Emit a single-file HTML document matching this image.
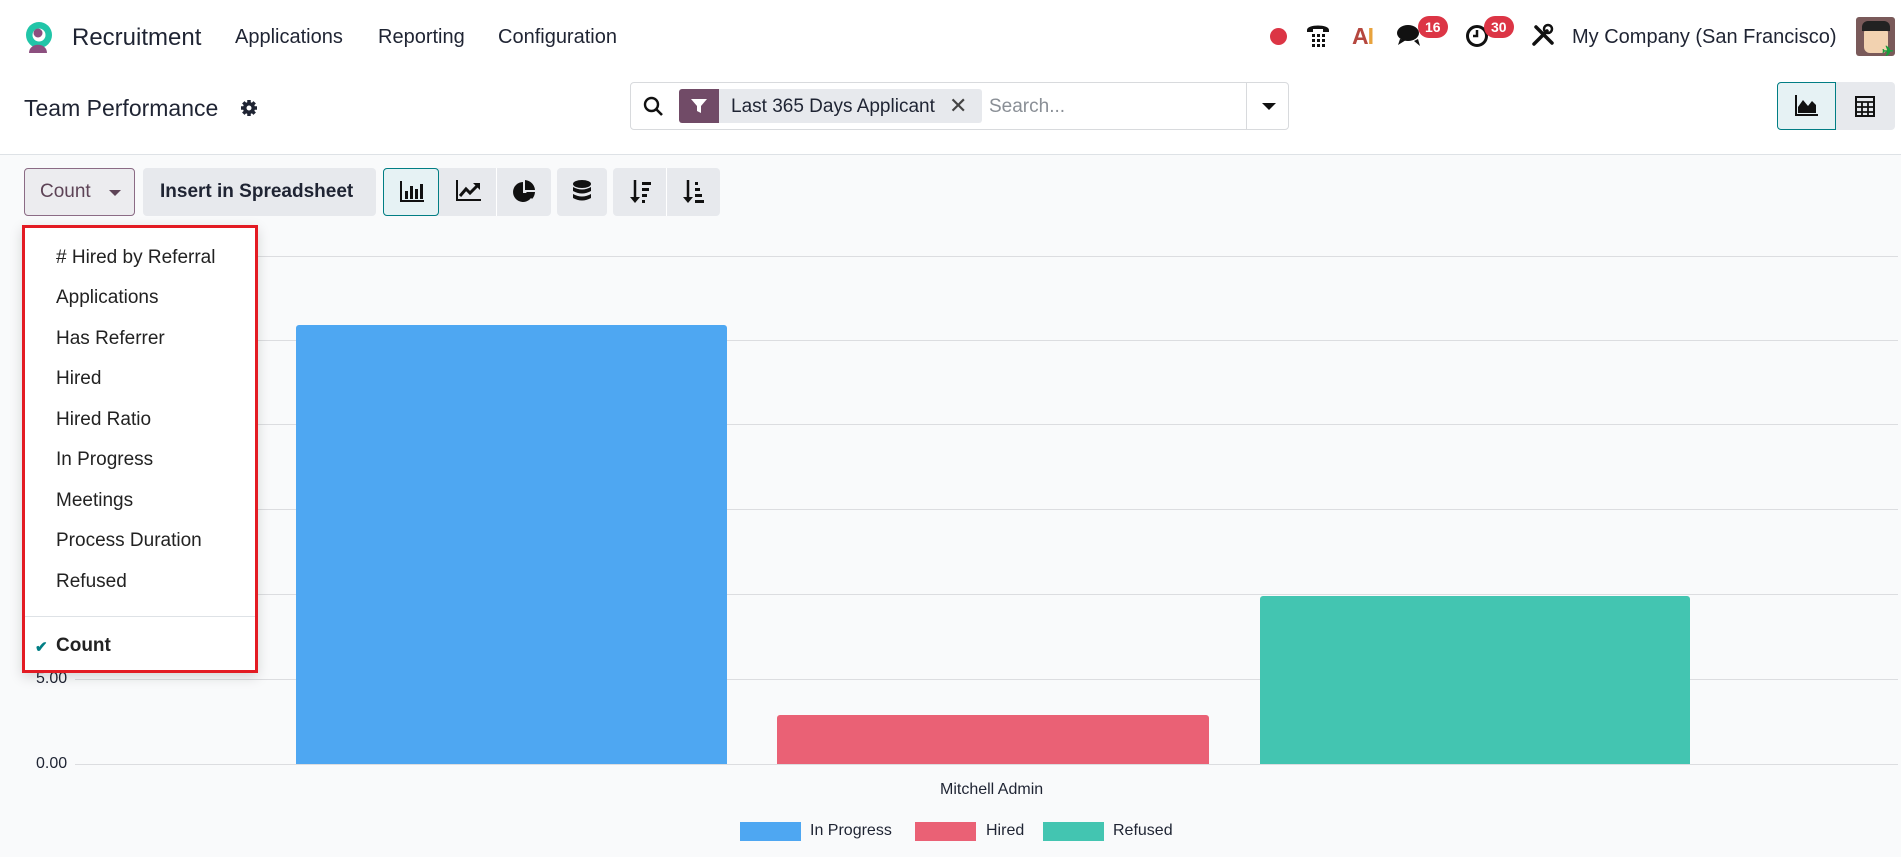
<!DOCTYPE html>
<html><head><meta charset="utf-8">
<style>
*{box-sizing:border-box;margin:0;padding:0}
body{width:1901px;height:857px;overflow:hidden;font-family:"Liberation Sans",sans-serif;color:#1f2433;background:#f9fafb;position:relative}
.abs{position:absolute}
.top{position:absolute;left:0;top:0;width:1901px;height:155px;background:#fff;border-bottom:1px solid #dee2e6}
.nav{font-size:20px;top:26px}
.btn{position:absolute;top:168px;height:48px;background:#e7e9ed;border-radius:4px}
.grid{position:absolute;left:75px;width:1823px;height:1px;background:#dcdde0}
.dd{position:absolute;left:22px;top:225px;width:236px;height:448px;background:#fff;border:3px solid #e31b23;box-shadow:0 4px 12px rgba(0,0,0,.15)}
.dd div{position:absolute;left:31px;font-size:19px;color:#222}
.badge{position:absolute;background:#dc3545;color:#fff;font-size:14px;font-weight:bold;border-radius:11px;height:22px;line-height:22px;padding:0 7px}
</style></head><body>
<div class="top"></div>
<svg class="abs" style="left:23px;top:20px" width="33" height="33" viewBox="0 0 33 33"><circle cx="16" cy="15" r="13" fill="#21c5a8"/><circle cx="16" cy="15" r="6.5" fill="#fff"/><circle cx="15" cy="13" r="4.5" fill="#8c4f7f"/><path d="M6 33 C6 22 24 22 24 33Z" fill="#8c4f7f"/></svg>
<div class="abs" style="left:72px;top:24px;font-size:24px">Recruitment</div>
<div class="abs nav" style="left:235px">Applications</div>
<div class="abs nav" style="left:378px">Reporting</div>
<div class="abs nav" style="left:498px">Configuration</div>
<div class="abs" style="left:1270px;top:28px;width:17px;height:17px;border-radius:50%;background:#dc3545"></div>
<svg class="abs" style="left:1305px;top:22px" width="26" height="26" viewBox="0 0 26 26"><path d="M2 8 C2 2 24 2 24 8 L24 10 L18 10 L18 7 L8 7 L8 10 L2 10Z" fill="#111"/><g fill="#111"><rect x="7" y="12" width="3" height="3"/><rect x="12" y="12" width="3" height="3"/><rect x="17" y="12" width="3" height="3"/><rect x="7" y="17" width="3" height="3"/><rect x="12" y="17" width="3" height="3"/><rect x="17" y="17" width="3" height="3"/><rect x="7" y="22" width="3" height="3"/><rect x="12" y="22" width="3" height="3"/><rect x="17" y="22" width="3" height="3"/></g></svg>
<div class="abs" style="left:1352px;top:23px;font-size:23px;font-weight:bold;color:#b5473f;letter-spacing:-1px">A<span style="color:#e8a33d">I</span></div>
<svg class="abs" style="left:1396px;top:22px" width="30" height="26" viewBox="0 0 30 26"><ellipse cx="12" cy="11" rx="11" ry="8" fill="#111"/><path d="M4 17 L2 23 L10 18Z" fill="#111"/><path d="M18 19 L24 24 L22 17Z" fill="#111"/></svg>
<div class="badge" style="left:1418px;top:16px">16</div>
<svg class="abs" style="left:1465px;top:23px" width="26" height="26" viewBox="0 0 26 26"><circle cx="12" cy="13" r="9.5" fill="none" stroke="#111" stroke-width="3"/><path d="M12 7 V13 H8" fill="none" stroke="#111" stroke-width="2.5"/></svg>
<div class="badge" style="left:1484px;top:16px">30</div>
<svg class="abs" style="left:1531px;top:23px" width="24" height="24" viewBox="0 0 24 24"><path d="M3 21 L16 8 M5 4 L21 20" stroke="#111" stroke-width="3.5" stroke-linecap="round"/><circle cx="17" cy="6" r="4" fill="none" stroke="#111" stroke-width="2.5"/></svg>
<div class="abs nav" style="left:1572px">My Company (San Francisco)</div>
<div class="abs" style="left:1856px;top:17px;width:39px;height:39px;background:#7a5a5a;border-radius:3px;overflow:hidden"><div style="position:absolute;left:8px;top:10px;width:24px;height:26px;background:#f2d2b0;border-radius:6px"></div><div style="position:absolute;left:6px;top:4px;width:28px;height:10px;background:#222;border-radius:6px 6px 0 0"></div><div style="position:absolute;left:26px;top:26px;color:#1a9c3c;font-weight:bold;font-size:14px">✈</div></div>
<div class="abs" style="left:24px;top:95px;font-size:23px">Team Performance</div>
<svg class="abs" style="left:240px;top:99px" width="18" height="18" viewBox="0 0 18 18"><circle cx="9" cy="9" r="6" fill="#1f2433"/><g stroke="#1f2433" stroke-width="3.5"><path d="M9 1V17M1 9H17M3.3 3.3L14.7 14.7M14.7 3.3L3.3 14.7"/></g><circle cx="9" cy="9" r="2.5" fill="#fff"/></svg>
<div class="abs" style="left:630px;top:82px;width:659px;height:48px;border:1px solid #d8dadd;border-radius:4px;background:#fff"></div>
<svg class="abs" style="left:643px;top:96px" width="21" height="21" viewBox="0 0 21 21"><circle cx="8.5" cy="8.5" r="6.5" fill="none" stroke="#111" stroke-width="2.4"/><path d="M13.5 13.5 L19 19" stroke="#111" stroke-width="2.6"/></svg>
<div class="abs" style="left:679px;top:89px;width:40px;height:34px;background:#714b67;border-radius:3px 0 0 3px"></div>
<svg class="abs" style="left:690px;top:97px" width="18" height="18" viewBox="0 0 18 18"><path d="M1 2 H17 L11 9 V16 L7 14 V9Z" fill="#fff"/></svg>
<div class="abs" style="left:719px;top:89px;width:263px;height:34px;background:#e7e9ed;border-radius:0 3px 3px 0"></div>
<div class="abs" style="left:731px;top:96px;font-size:19px">Last 365 Days Applicant</div>
<div class="abs" style="left:949px;top:93px;font-size:22px;color:#444">✕</div>
<div class="abs" style="left:989px;top:96px;font-size:19px;color:#8a8f96">Search...</div>
<div class="abs" style="left:1246px;top:83px;width:1px;height:46px;background:#d8dadd"></div>
<div class="abs" style="left:1262px;top:103px;border-left:7px solid transparent;border-right:7px solid transparent;border-top:7px solid #111"></div>
<div class="abs" style="left:1777px;top:82px;width:59px;height:48px;background:#e6f2f4;border:1px solid #017e84;border-radius:4px 0 0 4px"></div>
<svg class="abs" style="left:1794px;top:95px" width="24" height="22" viewBox="0 0 24 22"><path d="M2 0V20H24" fill="none" stroke="#111" stroke-width="2"/><path d="M4 18 L4 12 L9 5 L14 11 L18 6 L22 10 L22 18Z" fill="#111"/></svg>
<div class="abs" style="left:1836px;top:82px;width:59px;height:48px;background:#e7e9ed;border-radius:0 4px 4px 0"></div>
<svg class="abs" style="left:1855px;top:96px" width="20" height="21" viewBox="0 0 20 21"><rect x="1" y="1" width="18" height="19" fill="none" stroke="#111" stroke-width="2"/><path d="M1 6H19M1 11H19M1 16H19M7 6V20M13 6V20" stroke="#111" stroke-width="1.8"/></svg>
<div class="btn" style="left:24px;width:111px;background:#ececef;border:1px solid #8b6b85"></div>
<div class="abs" style="left:40px;top:181px;font-size:19px;color:#5d4356">Count</div>
<div class="abs" style="left:109px;top:190px;border-left:6px solid transparent;border-right:6px solid transparent;border-top:6px solid #5d4356"></div>
<div class="btn" style="left:143px;width:233px"></div>
<div class="abs" style="left:160px;top:181px;font-size:19px;font-weight:bold">Insert in Spreadsheet</div>
<div class="btn" style="left:383px;width:168px"></div>
<div class="btn" style="left:383px;width:56px;background:#e6f2f4;border:1px solid #017e84"></div>
<div class="abs" style="left:496px;top:168px;width:1px;height:48px;background:#fff"></div>
<div class="btn" style="left:557px;width:50px"></div>
<div class="btn" style="left:613px;width:107px"></div>
<div class="abs" style="left:666px;top:168px;width:1px;height:48px;background:#fff"></div>
<svg class="abs" style="left:400px;top:181px" width="24" height="22" viewBox="0 0 24 22"><path d="M1 0V20H24" fill="none" stroke="#111" stroke-width="2"/><rect x="5" y="10" width="3" height="8" fill="#111"/><rect x="10" y="5" width="3" height="13" fill="#111"/><rect x="15" y="8" width="3" height="10" fill="#111"/><rect x="20" y="3" width="3" height="15" fill="#111"/></svg>
<svg class="abs" style="left:456px;top:180px" width="25" height="22" viewBox="0 0 25 22"><path d="M1 0V20H25" fill="none" stroke="#111" stroke-width="2"/><path d="M4 16 L10 9 L14 13 L22 5" fill="none" stroke="#111" stroke-width="3"/><path d="M17 3H24V10Z" fill="#111"/></svg>
<svg class="abs" style="left:513px;top:180px" width="23" height="23" viewBox="0 0 23 23"><path d="M10 2 A10 10 0 1 0 20 13 L10 13Z" fill="#111"/><path d="M12 0 A11 11 0 0 1 22 10 L12 10Z" fill="#111"/><path d="M13 12 L22 12 A11 11 0 0 1 19 19Z" fill="#111"/></svg>
<svg class="abs" style="left:572px;top:180px" width="20" height="24" viewBox="0 0 20 24"><ellipse cx="10" cy="4" rx="9" ry="4" fill="#111"/><path d="M1 7 Q10 12 19 7 V11 Q10 16 1 11Z M1 14 Q10 19 19 14 V18 Q10 23 1 18Z" fill="#111"/></svg>
<svg class="abs" style="left:630px;top:180px" width="22" height="24" viewBox="0 0 22 24"><path d="M5 0V20" stroke="#111" stroke-width="2.5"/><path d="M0 17 L5 23 L10 17Z" fill="#111"/><rect x="12" y="2" width="9" height="3" fill="#111"/><rect x="12" y="8" width="7" height="3" fill="#111"/><rect x="12" y="14" width="5" height="3" fill="#111"/><rect x="12" y="20" width="3" height="3" fill="#111"/></svg>
<svg class="abs" style="left:683px;top:180px" width="22" height="24" viewBox="0 0 22 24"><path d="M5 0V20" stroke="#111" stroke-width="2.5"/><path d="M0 17 L5 23 L10 17Z" fill="#111"/><rect x="12" y="2" width="3" height="3" fill="#111"/><rect x="12" y="8" width="5" height="3" fill="#111"/><rect x="12" y="14" width="7" height="3" fill="#111"/><rect x="12" y="20" width="9" height="3" fill="#111"/></svg>
<div class="grid" style="top:256px"></div>
<div class="grid" style="top:340px"></div>
<div class="grid" style="top:424px"></div>
<div class="grid" style="top:509px"></div>
<div class="grid" style="top:594px"></div>
<div class="grid" style="top:679px"></div>
<div class="grid" style="top:764px"></div>
<div class="abs" style="left:36px;top:670px;font-size:16px">5.00</div>
<div class="abs" style="left:36px;top:755px;font-size:16px">0.00</div>
<div class="abs" style="left:296px;top:325px;width:431px;height:439px;background:#4ea7f2;border-radius:3px 3px 0 0"></div>
<div class="abs" style="left:777px;top:715px;width:432px;height:49px;background:#ea6175;border-radius:3px 3px 0 0"></div>
<div class="abs" style="left:1260px;top:596px;width:430px;height:168px;background:#43c5b1;border-radius:3px 3px 0 0"></div>
<div class="abs" style="left:940px;top:781px;font-size:16px">Mitchell Admin</div>
<div class="abs" style="left:740px;top:822px;width:61px;height:19px;background:#4ea7f2"></div>
<div class="abs" style="left:810px;top:822px;font-size:16px">In Progress</div>
<div class="abs" style="left:915px;top:822px;width:61px;height:19px;background:#ea6175"></div>
<div class="abs" style="left:986px;top:822px;font-size:16px">Hired</div>
<div class="abs" style="left:1043px;top:822px;width:61px;height:19px;background:#43c5b1"></div>
<div class="abs" style="left:1113px;top:822px;font-size:16px">Refused</div>
<div class="dd">
<div style="top:19px"># Hired by Referral</div>
<div style="top:59px">Applications</div>
<div style="top:100px">Has Referrer</div>
<div style="top:140px">Hired</div>
<div style="top:181px">Hired Ratio</div>
<div style="top:221px">In Progress</div>
<div style="top:262px">Meetings</div>
<div style="top:302px">Process Duration</div>
<div style="top:343px">Refused</div>
<span style="position:absolute;left:0;top:388px;width:230px;height:1px;background:#dee2e6"></span>
<span style="position:absolute;left:10px;top:410px;font-size:15px;color:#017e84;font-weight:bold">✔</span>
<div style="top:407px;font-weight:bold">Count</div>
</div>
</body></html>
